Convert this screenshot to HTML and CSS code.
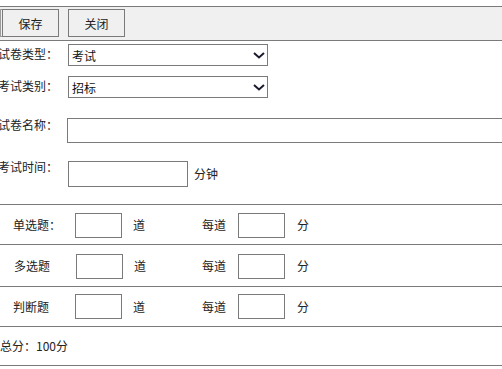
FILE: index.html
```html
<!DOCTYPE html>
<html lang="zh-CN">
<head>
  <meta charset="UTF-8">
  <title>试卷设置</title>
  <link rel="stylesheet" href="styles.css">
</head>
<body>
  <div class="toolbar">
    <button class="btn">保存</button>
    <button class="btn">关闭</button>
  </div>

  <div class="form">
    <div class="row">
      <label class="lbl">试卷类型：</label>
      <span class="sel-wrap">
        <select class="sel"><option>考试</option><option>练习</option></select>
        <svg class="arrow" width="12" height="7" viewBox="0 0 12 7"><path d="M1 1 L6 5.5 L11 1" fill="none" stroke="#1a1a2e" stroke-width="2"/></svg>
      </span>
    </div>
    <div class="row">
      <label class="lbl">考试类别：</label>
      <span class="sel-wrap">
        <select class="sel"><option>招标</option><option>其他</option></select>
        <svg class="arrow" width="12" height="7" viewBox="0 0 12 7"><path d="M1 1 L6 5.5 L11 1" fill="none" stroke="#1a1a2e" stroke-width="2"/></svg>
      </span>
    </div>
    <div class="row row-name">
      <label class="lbl">试卷名称：</label>
      <input type="text" class="txt txt-name">
    </div>
    <div class="row row-time">
      <label class="lbl">考试时间：</label>
      <input type="text" class="txt txt-time">
      <span class="after">分钟</span>
    </div>
  </div>

  <div class="score">
    <div class="q-row">
      <span class="q-name">单选题：</span>
      <input type="text" class="txt small">
      <span class="unit">道</span>
      <span class="per">每道</span>
      <input type="text" class="txt small">
      <span class="unit2">分</span>
    </div>
    <div class="q-row q-two">
      <span class="q-name">多选题</span>
      <input type="text" class="txt small">
      <span class="unit">道</span>
      <span class="per">每道</span>
      <input type="text" class="txt small">
      <span class="unit2">分</span>
    </div>
    <div class="q-row q-three">
      <span class="q-name">判断题</span>
      <input type="text" class="txt small">
      <span class="unit">道</span>
      <span class="per">每道</span>
      <input type="text" class="txt small">
      <span class="unit2">分</span>
    </div>
    <div class="total">总分：100分</div>
  </div>
</body>
</html>
```

FILE: styles.css
```css
body { margin: 0; padding-top: 6px; font-family: "Noto Sans CJK SC", "Noto Sans", sans-serif; font-size: 12px; color: #222; background: #fff; overflow: hidden; }

.toolbar { display: flex; gap: 9px; padding: 2px 0 0 2px; box-sizing: border-box; height: 35px; background: #f0f0f0; border-top: 1px solid #7a7a7a; border-bottom: 1px solid #7a7a7a; }
.btn { width: 57px; height: 28px; background: #f0f0f0; border: 1px solid #7a7a7a; font-family: inherit; font-size: 12px; color: #222; padding: 0; }
.btn:first-child { box-shadow: -2px 0 0 -1px #f0f0f0, -2px 0 0 0 #9a9a9a; }

.form { padding-top: 3px; }
.row { display: flex; align-items: flex-start; }
.row + .row { margin-top: 10px; }
.row-name { margin-top: 20px !important; }
.row-time { margin-top: 18px !important; padding-bottom: 17px; }
.lbl { width: 60px; margin-left: -2px; margin-right: 10px; white-space: nowrap; line-height: 20px; flex-shrink: 0; }
.row-name .lbl { margin-right: 9px; line-height: 14px; }
.row-time .lbl { line-height: 12px; }

.sel-wrap { position: relative; display: inline-block; }
.sel { appearance: none; -webkit-appearance: none; width: 200px; height: 22px; border: 1px solid #7a7a7a; border-radius: 0; background: #fff; font-family: inherit; font-size: 12px; color: #111; padding: 0 0 0 3px; margin: 0; }
.arrow { position: absolute; right: 3px; top: 8px; pointer-events: none; }

.txt { box-sizing: border-box; border: 1px solid #7a7a7a; background: #fff; margin: 0; padding: 0 3px; font-family: inherit; font-size: 12px; flex-shrink: 0; }
.txt-name { width: 450px; height: 25px; }
.txt-time { width: 120px; height: 26px; }
.after { margin-left: 6px; line-height: 26px; }

.score { border-top: 1px solid #7a7a7a; }
.q-row { display: flex; align-items: center; height: 39px; padding-left: 13px; border-bottom: 1px solid #7a7a7a; }
.q-two { height: 41px; padding-left: 14px; }
.q-name { width: 62px; flex-shrink: 0; }
.small { width: 47px; height: 25px; }
.unit { width: 69px; margin-left: 11px; flex-shrink: 0; }
.per { width: 36px; flex-shrink: 0; }
.q-two .per { margin-left: -1px; }
.unit2 { margin-left: 12px; }
.q-row:first-child .small, .q-two .small { margin-top: 2px; }
.total { height: 38px; line-height: 38px; border-bottom: 1px solid #7a7a7a; }
```
